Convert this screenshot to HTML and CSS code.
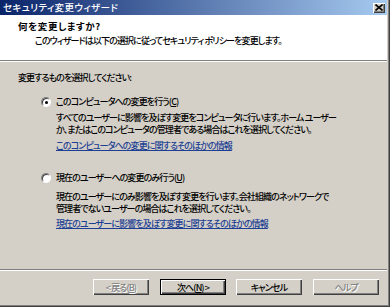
FILE: index.html
```html
<!DOCTYPE html>
<html lang="ja">
<head>
    <meta charset="UTF-8">
    <title>セキュリティ変更ウィザード</title>
    <link rel="stylesheet" href="styles.css">
</head>
<body>
    <div class="window">
        <div class="titlebar">
            <span class="title">セキュリティ変更ウィザード</span>
            <span class="close">
                <svg width="8" height="7" viewBox="0 0 8 7">
                    <path d="M0.5 0.5 L7.5 6.5 M7.5 0.5 L0.5 6.5" stroke="#000" stroke-width="1.6"/>
                </svg>
            </span>
        </div>

        <div class="header">
            <div class="heading">何を変更しますか?</div>
            <div class="subheading">このウィザードは以下の選択に従ってセキュリティ ポリシーを変更します。</div>
        </div>

        <div class="content">
            <div class="prompt">変更するものを選択してください:</div>

            <div class="option">
                <div class="radio-row">
                    <span class="radio checked"></span>
                    <span>このコンピュータへの変更を行う(<u>C</u>)</span>
                </div>
                <p class="desc">すべてのユーザーに影響を及ぼす変更をコンピュータに行います。ホーム ユーザー<br>か、またはこのコンピュータの管理者である場合はこれを選択してください。</p>
                <a class="more" href="#">このコンピュータへの変更に関するそのほかの情報</a>
            </div>

            <div class="option second">
                <div class="radio-row">
                    <span class="radio"></span>
                    <span>現在のユーザーへの変更のみ行う(<u>U</u>)</span>
                </div>
                <p class="desc tight">現在のユーザーにのみ影響を及ぼす変更を行います。会社組織のネットワークで<br>管理者でないユーザーの場合はこれを選択してください。</p>
                <a class="more" href="#">現在のユーザーに影響を及ぼす変更に関するそのほかの情報</a>
            </div>
        </div>

        <div class="footer">
            <button class="btn" disabled>&lt; 戻る(<u>B</u>)</button>
            <button class="btn default">次へ(<u>N</u>) &gt;</button>
            <button class="btn cancel">キャンセル</button>
            <button class="btn help" disabled>ヘルプ</button>
        </div>
    </div>
</body>
</html>
```

FILE: styles.css
```css
* {
    margin: 0;
    padding: 0;
    box-sizing: border-box;
}

body {
    font-family: "Noto Sans CJK JP", sans-serif;
    font-size: 9px;
    font-weight: 500;
    letter-spacing: -0.9px;
    font-feature-settings: "palt";
    color: #000;
    background-color: #d4d0c8;
    width: 390px;
    height: 307px;
    overflow: hidden;
}

.window {
    width: 390px;
    height: 307px;
    display: flex;
    flex-direction: column;
    padding: 0 3px 3px 0;
    background-color: #d4d0c8;
    box-shadow: inset -1px -1px 0 #404040, inset -2px -2px 0 #808080;
}

.titlebar {
    height: 15px;
    display: flex;
    align-items: center;
    justify-content: space-between;
    padding: 0 2px 0 3px;
    background: linear-gradient(to right, #0a246a, #a6caf0);
}

.title {
    color: #fff;
    font-size: 9.5px;
    letter-spacing: 0.4px;
    line-height: 15px;
}

.close {
    width: 12px;
    height: 10px;
    display: flex;
    align-items: center;
    justify-content: center;
    background-color: #d4d0c8;
    box-shadow: inset 1px 1px 0 #fff, inset -1px -1px 0 #404040, inset -2px -2px 0 #808080;
}

.header {
    height: 46px;
    background-color: #fff;
    padding: 6px 0 0 18px;
    border-bottom: 1px solid #808080;
    box-shadow: 0 1px 0 #fff;
}

.heading {
    font-size: 9.5px;
    font-weight: bold;
    letter-spacing: 0.6px;
    line-height: 11px;
}

.subheading {
    line-height: 11px;
    margin-top: 3px;
    padding-left: 17px;
}

.content {
    flex: 1;
    padding: 11px 0 0 18px;
}

.prompt {
    line-height: 11px;
}

.option {
    padding-left: 24px;
    margin-top: 13px;
}

.option.second {
    margin-top: 21px;
}

.radio-row {
    display: flex;
    align-items: center;
    gap: 5px;
    line-height: 11px;
}

.radio {
    width: 10px;
    height: 10px;
    margin-left: -1px;
    border-radius: 50%;
    background-color: #fff;
    border: 1px solid;
    border-color: #808080 #fff #fff #808080;
    box-shadow: inset 1px 1px 0 #404040;
    position: relative;
}

.radio.checked::after {
    content: "";
    position: absolute;
    left: 3px;
    top: 3px;
    width: 3px;
    height: 3px;
    border-radius: 50%;
    background-color: #000;
}

.desc {
    margin: 5px 0 0 14px;
    line-height: 12px;
}

.desc.tight {
    margin-top: 8px;
    line-height: 11.5px;
}

.more {
    display: block;
    margin: 4px 0 0 14px;
    line-height: 11px;
    color: #1c3f94;
}

.footer {
    height: 35px;
    border-top: 1px solid #808080;
    box-shadow: inset 0 1px 0 #fff;
    display: flex;
    align-items: flex-start;
    padding: 9px 0 0 93px;
}

.btn {
    width: 56px;
    height: 16px;
    font-family: inherit;
    font-size: inherit;
    font-weight: inherit;
    letter-spacing: inherit;
    font-feature-settings: inherit;
    background-color: #d4d0c8;
    border: none;
    box-shadow: inset 1px 1px 0 #fff, inset -1px -1px 0 #404040, inset -2px -2px 0 #808080;
    color: #000;
}

.btn:disabled {
    color: #808080;
    text-shadow: 1px 1px 0 #fff;
}

.btn.default {
    width: 66px;
    margin-left: 11px;
    border: 1px solid #000;
}

.btn.cancel {
    width: 66px;
    margin-left: 10px;
}

.btn.help {
    width: 66px;
    margin-left: 11px;
}
```
